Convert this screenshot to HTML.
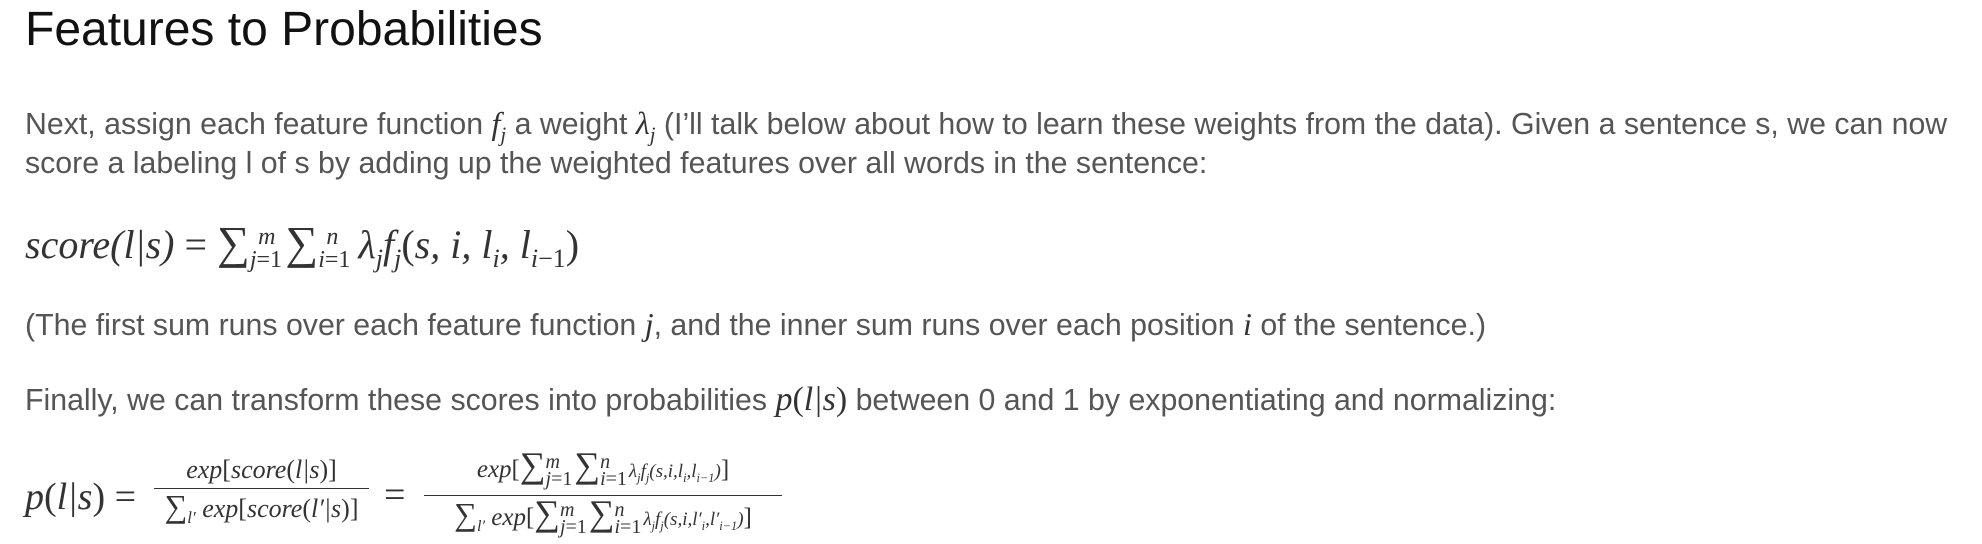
<!DOCTYPE html>
<html><head><meta charset="utf-8"><style>
body{margin:0;width:1982px;height:544px;background:#fff;position:relative;overflow:hidden;font-family:"Liberation Sans",Arial,sans-serif;}
.a{position:absolute;white-space:nowrap;}
h1{position:absolute;left:25px;top:2px;margin:0;font-weight:normal;font-size:48px;color:#111;}
.t{font-size:30.3px;color:#555;left:25px;line-height:34px;}
.m{font-family:"Liberation Serif",serif;font-style:italic;color:#333;}
.r{font-style:normal;}
sub,sup{font-size:65%;}
.frac{position:absolute;text-align:center;}
.st{display:inline-block;vertical-align:-8px;font-size:20px;line-height:17px;text-align:left;margin-right:2px}
</style></head><body>
<h1>Features to Probabilities</h1>
<div class="a t" style="top:106px">Next, assign each feature function <span class="m" style="font-size:32px">f<sub>j</sub></span> a weight <span class="m" style="font-size:32px">λ<sub>j</sub></span> (I’ll talk below about how to learn these weights from the data). Given a sentence s, we can now</div>
<div class="a t" style="top:147px">score a labeling l of s by adding up the weighted features over all words in the sentence:</div>
<div class="a m" style="left:25px;top:216px;font-size:40px">score(l|s) <span class="r">=</span> <span class="r" style="font-size:46px">∑</span><sub style="font-size:60%">j<span class="r">=1</span></sub><sup style="font-size:60%;margin-left:-24px">m</sup> <span class="r" style="font-size:46px">∑</span><sub style="font-size:60%">i<span class="r">=1</span></sub><sup style="font-size:60%;margin-left:-24px">n</sup>&nbsp; λ<sub>j</sub>f<sub>j</sub><span class="r">(</span>s, i, l<sub>i</sub>, l<sub>i<span class="r">−1</span></sub><span class="r">)</span></div>
<div class="a t" style="top:307px">(The first sum runs over each feature function <span class="m" style="font-size:32px">j</span>, and the inner sum runs over each position <span class="m" style="font-size:32px">i</span> of the sentence.)</div>
<div class="a t" style="top:383px">Finally, we can transform these scores into probabilities <span class="m" style="font-size:34px">p<span class="r">(</span>l|s<span class="r">)</span></span> between 0 and 1 by exponentiating and normalizing:</div>
<div class="a m" style="left:25px;top:475px;font-size:38px">p<span class="r">(</span>l|s<span class="r">)</span> <span class="r">=</span></div>
<div class="frac m" style="left:154px;top:455px;width:215px;font-size:26px;line-height:30px">
<div>exp<span class="r">[</span>score<span class="r">(</span>l|s<span class="r">)]</span></div>
<div style="border-top:1.5px solid #333;margin-top:3px;padding-top:2px"><span class="r" style="font-size:32px">∑</span><sub>l′</sub> exp<span class="r">[</span>score<span class="r">(</span>l′|s<span class="r">)]</span></div>
</div>
<div class="a m" style="left:384px;top:473px;font-size:38px"><span class="r">=</span></div>
<div class="frac m" style="left:424px;top:448px;width:358px;font-size:25px;line-height:34px">
<div>exp<span class="r">[<span style="font-size:36px">∑</span></span><span class="st">m<br>j<span class="r">=1</span></span><span class="r" style="font-size:36px">∑</span><span class="st">n<br>i<span class="r">=1</span></span><span style="font-size:19px">λ<sub>j</sub>f<sub>j</sub>(s,i,l<sub>i</sub>,l<sub>i−1</sub>)</span><span class="r">]</span></div>
<div style="border-top:1.5px solid #333;margin-top:0px;padding-top:0px"><span class="r" style="font-size:32px">∑</span><sub>l′</sub> exp<span class="r">[<span style="font-size:36px">∑</span></span><span class="st">m<br>j<span class="r">=1</span></span><span class="r" style="font-size:36px">∑</span><span class="st">n<br>i<span class="r">=1</span></span><span style="font-size:19px">λ<sub>j</sub>f<sub>j</sub>(s,i,l′<sub>i</sub>,l′<sub>i−1</sub>)</span><span class="r">]</span></div>
</div>
</body></html>
